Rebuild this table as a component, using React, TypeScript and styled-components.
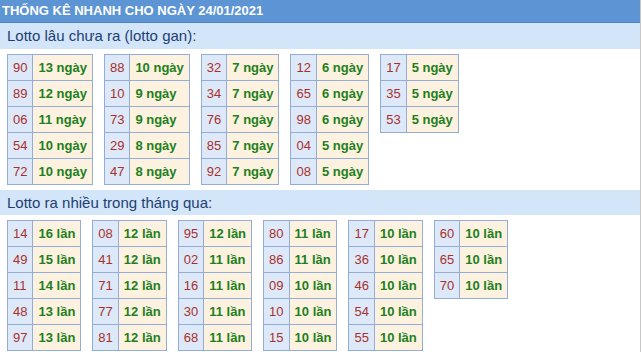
import React from "react";
import styled, { createGlobalStyle } from "styled-components";

const Global = createGlobalStyle`
  html, body { margin: 0; padding: 0; background: #ffffff; }
  body { font-family: "Liberation Sans", Arial, sans-serif; }
`;

const Box = styled.div`
  width: 640px;
  height: 352px;
  border-right: 1px solid #c9c9c9;
  overflow: hidden;
  background: #ffffff;
`;

const Header = styled.div`
  height: 22px;
  line-height: 22px;
  background: #5c94d4;
  border-bottom: 1px solid #4c84c6;
  color: #ffffff;
  font-size: 13px;
  font-weight: bold;
  padding-left: 2px;
  white-space: nowrap;
`;

const SectionTitle = styled.div<{ $h: number }>`
  height: ${(p) => p.$h}px;
  line-height: ${(p) => p.$h}px;
  background: #d3e6f9;
  color: #1d3e74;
  font-size: 15px;
  padding-left: 7px;
`;

const TableRow = styled.div`
  display: flex;
  align-items: flex-start;
  gap: 11px;
  padding: 5px 0 5px 7px;
`;

const Table = styled.table`
  border-collapse: collapse;
  font-size: 13px;
`;

const NumCell = styled.td`
  line-height: 25px;
  padding: 0 5px;
  border: 1px solid #93add6;
  background: #dde9f8;
  color: #a8302c;
`;

const ValCell = styled.td`
  line-height: 25px;
  padding: 0 5px;
  border: 1px solid #93add6;
  background: #fdf2df;
  color: #217f21;
  font-weight: bold;
  white-space: nowrap;
`;

type Item = [string, number];

const gan: Item[][] = [
  [["90", 13], ["89", 12], ["06", 11], ["54", 10], ["72", 10]],
  [["88", 10], ["10", 9], ["73", 9], ["29", 8], ["47", 8]],
  [["32", 7], ["34", 7], ["76", 7], ["85", 7], ["92", 7]],
  [["12", 6], ["65", 6], ["98", 6], ["04", 5], ["08", 5]],
  [["17", 5], ["35", 5], ["53", 5]],
];

const nhieu: Item[][] = [
  [["14", 16], ["49", 15], ["11", 14], ["48", 13], ["97", 13]],
  [["08", 12], ["41", 12], ["71", 12], ["77", 12], ["81", 12]],
  [["95", 12], ["02", 11], ["16", 11], ["30", 11], ["68", 11]],
  [["80", 11], ["86", 11], ["09", 10], ["10", 10], ["15", 10]],
  [["17", 10], ["36", 10], ["46", 10], ["54", 10], ["55", 10]],
  [["60", 10], ["65", 10], ["70", 10]],
];

function StatTable({ items, unit }: { items: Item[]; unit: string }) {
  return (
    <Table>
      <tbody>
        {items.map(([n, c]) => (
          <tr key={n}>
            <NumCell>{n}</NumCell>
            <ValCell>
              {c} {unit}
            </ValCell>
          </tr>
        ))}
      </tbody>
    </Table>
  );
}

export default function App() {
  return (
    <>
      <Global />
      <Box>
        <Header>THỐNG KÊ NHANH CHO NGÀY 24/01/2021</Header>
        <SectionTitle $h={26}>Lotto lâu chưa ra (lotto gan):</SectionTitle>
        <TableRow>
          {gan.map((t, i) => (
            <StatTable key={i} items={t} unit="ngày" />
          ))}
        </TableRow>
        <SectionTitle $h={25}>Lotto ra nhiều trong tháng qua:</SectionTitle>
        <TableRow>
          {nhieu.map((t, i) => (
            <StatTable key={i} items={t} unit="lần" />
          ))}
        </TableRow>
      </Box>
    </>
  );
}
